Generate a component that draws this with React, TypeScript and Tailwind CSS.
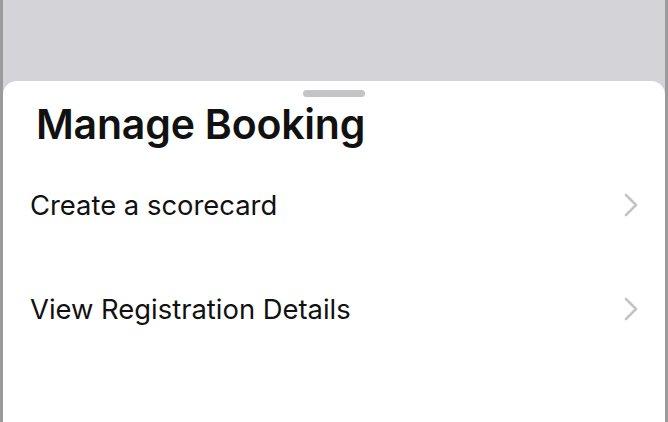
const rows = ['Create a scorecard', 'View Registration Details']

function Chevron() {
  return (
    <svg width="14" height="24" viewBox="0 0 14 24" className="mt-[10px] shrink-0">
      <polyline
        points="2,2 12,12 2,22"
        fill="none"
        stroke="#c4c4c6"
        strokeWidth="2.6"
        strokeLinecap="round"
        strokeLinejoin="round"
      />
    </svg>
  )
}

export default function App() {
  return (
    <div
      className="flex h-[422px] w-[668px] flex-col overflow-hidden border-x-[3px] border-[#9b9b9b] bg-[#d3d3d8]"
      style={{ fontFamily: 'Inter, "Noto Sans", sans-serif' }}
    >
      <div className="mt-[81px] flex flex-1 flex-col rounded-t-[14px] bg-white">
        {/* grabber */}
        <div className="mx-auto mt-[9px] h-[7px] w-[62px] rounded-full bg-[#c4c4c6]" />
        <h1 className="mt-[2px] pl-[33px] text-[41px] font-semibold leading-[50px] tracking-[-0.2px] text-[#111]">
          Manage Booking
        </h1>
        <div className="mt-[34px] flex flex-col">
          {rows.map((r) => (
            <div key={r} className="flex h-[104px] items-start justify-between pl-[27px] pr-[27px]">
              <span className="mt-[2px] text-[27.4px] leading-[40px] text-[#111]">{r}</span>
              <Chevron />
            </div>
          ))}
        </div>
      </div>
    </div>
  )
}
